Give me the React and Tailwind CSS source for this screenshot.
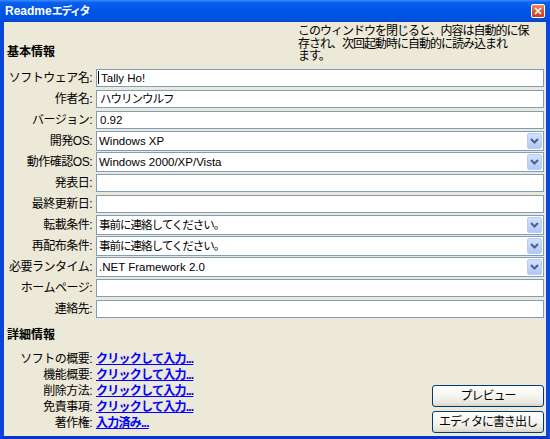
import React from "react";

const rows = [
  { label: "ソフトウェア名:", type: "input", value: "Tally Ho!", caret: true },
  { label: "作者名:", type: "input", value: "ハウリンウルフ", jp: true },
  { label: "バージョン:", type: "input", value: "0.92" },
  { label: "開発OS:", type: "select", value: "Windows XP" },
  { label: "動作確認OS:", type: "select", value: "Windows 2000/XP/Vista" },
  { label: "発表日:", type: "input", value: "" },
  { label: "最終更新日:", type: "input", value: "" },
  { label: "転載条件:", type: "select", value: "事前に連絡してください。", jp: true },
  { label: "再配布条件:", type: "select", value: "事前に連絡してください。", jp: true },
  { label: "必要ランタイム:", type: "select", value: ".NET Framework 2.0" },
  { label: "ホームページ:", type: "input", value: "" },
  { label: "連絡先:", type: "input", value: "" },
];

const details = [
  { label: "ソフトの概要:", link: "クリックして入力..." },
  { label: "機能概要:", link: "クリックして入力..." },
  { label: "削除方法:", link: "クリックして入力..." },
  { label: "免責事項:", link: "クリックして入力..." },
  { label: "著作権:", link: "入力済み..." },
];

function DropButton() {
  return (
    <div className="w-[15px] h-[16px] shrink-0 rounded-[2px] border border-[#B9CCF5] bg-[linear-gradient(to_bottom,#D2E0FD,#C2D5FC_50%,#B2C8F7)] flex items-center justify-center">
      <svg width="9" height="6" viewBox="0 0 9 6">
        <polyline points="1,1 4.5,4.5 8,1" fill="none" stroke="#4D6185" strokeWidth="2" />
      </svg>
    </div>
  );
}

function Control({ row }) {
  const textCls = row.jp
    ? "text-[11.5px] tracking-[-1px] leading-[14px] whitespace-nowrap"
    : "text-[11.5px] leading-[14px] whitespace-nowrap";
  if (row.type === "select") {
    return (
      <div className="h-[20px] border border-[#7F9DB9] bg-white flex items-center pl-[2px] pr-[1px]">
        <div className={"flex-1 " + textCls}>{row.value}</div>
        <DropButton />
      </div>
    );
  }
  return (
    <div className="h-[18px] border border-[#7F9DB9] bg-white flex items-center pl-[1px] overflow-hidden">
      {row.caret ? <span className="w-[1px] h-[13px] bg-black mr-[1px]" /> : <span className="w-[1px]" />}
      <div className={textCls + " pl-[1px]"}>{row.value}</div>
    </div>
  );
}

export default function App() {
  return (
    <div className="w-[550px] h-[439px] flex flex-col overflow-hidden text-black font-['Liberation_Sans','Noto_Sans_CJK_JP',sans-serif]">
      {/* Title bar */}
      <div className="h-[22px] shrink-0 flex items-center justify-between bg-[linear-gradient(to_bottom,#3A8CFF,#0A5EF0_12%,#0055E5_50%,#0052DF_85%,#0043CC)]">
        <div className="pl-[5px] text-white font-bold text-[12px] leading-[14px] whitespace-nowrap">
          Readme<span className="tracking-[-1.5px] text-[11px]">エディタ</span>
        </div>
        <div className="mr-[5px] w-[14px] h-[14px] rounded-[2px] border border-white bg-[linear-gradient(to_bottom,#EE8A6A,#DD5A33_50%,#C9401A)] flex items-center justify-center">
          <svg width="8" height="8" viewBox="0 0 8 8">
            <path d="M1 1 L7 7 M7 1 L1 7" stroke="white" strokeWidth="1.7" />
          </svg>
        </div>
      </div>

      {/* Client */}
      <div className="flex-1 flex flex-col bg-[#ECE9D8] border-l-[4px] border-r-[4px] border-b-[3px] border-l-[#0847D9] border-r-[#0847D9] border-b-[#0735C9]">
        {/* Top section */}
        <div className="h-[45px] shrink-0 flex justify-between">
          <div className="pl-[3px] pt-[23px] text-[12px] leading-[14px] font-bold whitespace-nowrap">基本情報</div>
          <div className="w-[248px] pt-[3px] text-[12px] leading-[12.5px] tracking-[-1px] whitespace-nowrap">
            このウィンドウを閉じると、内容は自動的に保
            <br />
            存され、次回起動時に自動的に読み込まれ
            <br />
            ます。
          </div>
        </div>

        {/* Form rows */}
        <div className="flex flex-col shrink-0">
          {rows.map((row, i) => (
            <div key={i} className="h-[21px] flex items-center">
              <div className="w-[88px] shrink-0 text-right text-[12px] leading-[14px] tracking-[-0.5px] whitespace-nowrap">
                {row.label}
              </div>
              <div className="ml-[4px] mr-[2px] flex-1">
                <Control row={row} />
              </div>
            </div>
          ))}
        </div>

        {/* Bottom section */}
        <div className="flex-1 flex justify-between">
          <div className="flex flex-col">
            <div className="mt-[9px] pl-[3px] h-[14px] text-[12px] leading-[14px] font-bold whitespace-nowrap">詳細情報</div>
            <div className="mt-[9px] flex flex-col">
              {details.map((d, i) => (
                <div key={i} className="h-[16px] flex items-center">
                  <div className="w-[88px] shrink-0 text-right text-[12px] leading-[14px] tracking-[-0.5px] whitespace-nowrap">
                    {d.label}
                  </div>
                  <a className="ml-[4px] text-[12px] leading-[14px] font-bold tracking-[-0.75px] text-[#0000FF] underline whitespace-nowrap cursor-pointer">
                    {d.link}
                  </a>
                </div>
              ))}
            </div>
          </div>
          <div className="flex flex-col justify-end gap-[4px] pb-[3px] mr-[2px]">
            <div className="w-[112px] h-[22px] rounded-[3px] border border-[#003C74] bg-[linear-gradient(to_bottom,#FFFFFF,#F5F4EF_50%,#E8E6DD_85%,#D8D2C6)] flex items-center justify-center text-[12px] leading-[14px] tracking-[-1px] whitespace-nowrap">
              プレビュー
            </div>
            <div className="w-[112px] h-[22px] rounded-[3px] border border-[#003C74] bg-[linear-gradient(to_bottom,#FFFFFF,#F5F4EF_50%,#E8E6DD_85%,#D8D2C6)] flex items-center justify-center text-[12px] leading-[14px] tracking-[-1px] whitespace-nowrap">
              エディタに書き出し
            </div>
          </div>
        </div>
      </div>
    </div>
  );
}
